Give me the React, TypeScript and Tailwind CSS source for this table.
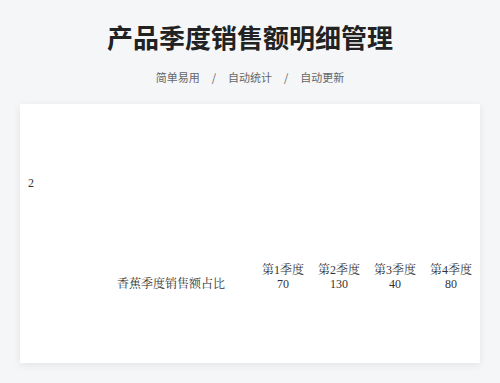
const quarters = [
  { name: '第1季度', value: 70 },
  { name: '第2季度', value: 130 },
  { name: '第3季度', value: 40 },
  { name: '第4季度', value: 80 },
];

export default function App() {
  return (
    <div className="min-h-screen bg-[#f5f6f8] pt-[19px] font-['Noto_Sans_CJK_SC',sans-serif]">
      <h1 className="text-center text-[26px] leading-[36px] font-bold text-[#222]">产品季度销售额明细管理</h1>
      <div className="mt-[13px] flex items-center justify-center text-[11px] leading-[18px] text-[#666]">
        <span>简单易用</span>
        <span className="mx-3">/</span>
        <span>自动统计</span>
        <span className="mx-3">/</span>
        <span>自动更新</span>
      </div>

      {/* Chart card */}
      <div className="mx-5 mt-[18px] h-[259px] bg-white pl-2 pr-px shadow-[0_2px_8px_rgba(0,0,0,0.08)] font-['Liberation_Serif','Noto_Serif_CJK_SC','AR_PL_UMing_CN',serif] text-[12px] text-[#333]">
        <div className="pt-[71px] leading-[16px]">2</div>
        <div className="mt-[72px] flex justify-end">
          <table className="border-collapse leading-[14px]">
            <thead>
              <tr>
                <th className="w-[138px] p-0" />
                {quarters.map((q) => (
                  <th key={q.name} className="w-[56px] p-0 text-center font-normal">{q.name}</th>
                ))}
              </tr>
            </thead>
            <tbody>
              <tr>
                <td className="p-0 text-left">香蕉季度销售额占比</td>
                {quarters.map((q) => (
                  <td key={q.name} className="p-0 text-center">{q.value}</td>
                ))}
              </tr>
            </tbody>
          </table>
        </div>
      </div>
    </div>
  );
}
